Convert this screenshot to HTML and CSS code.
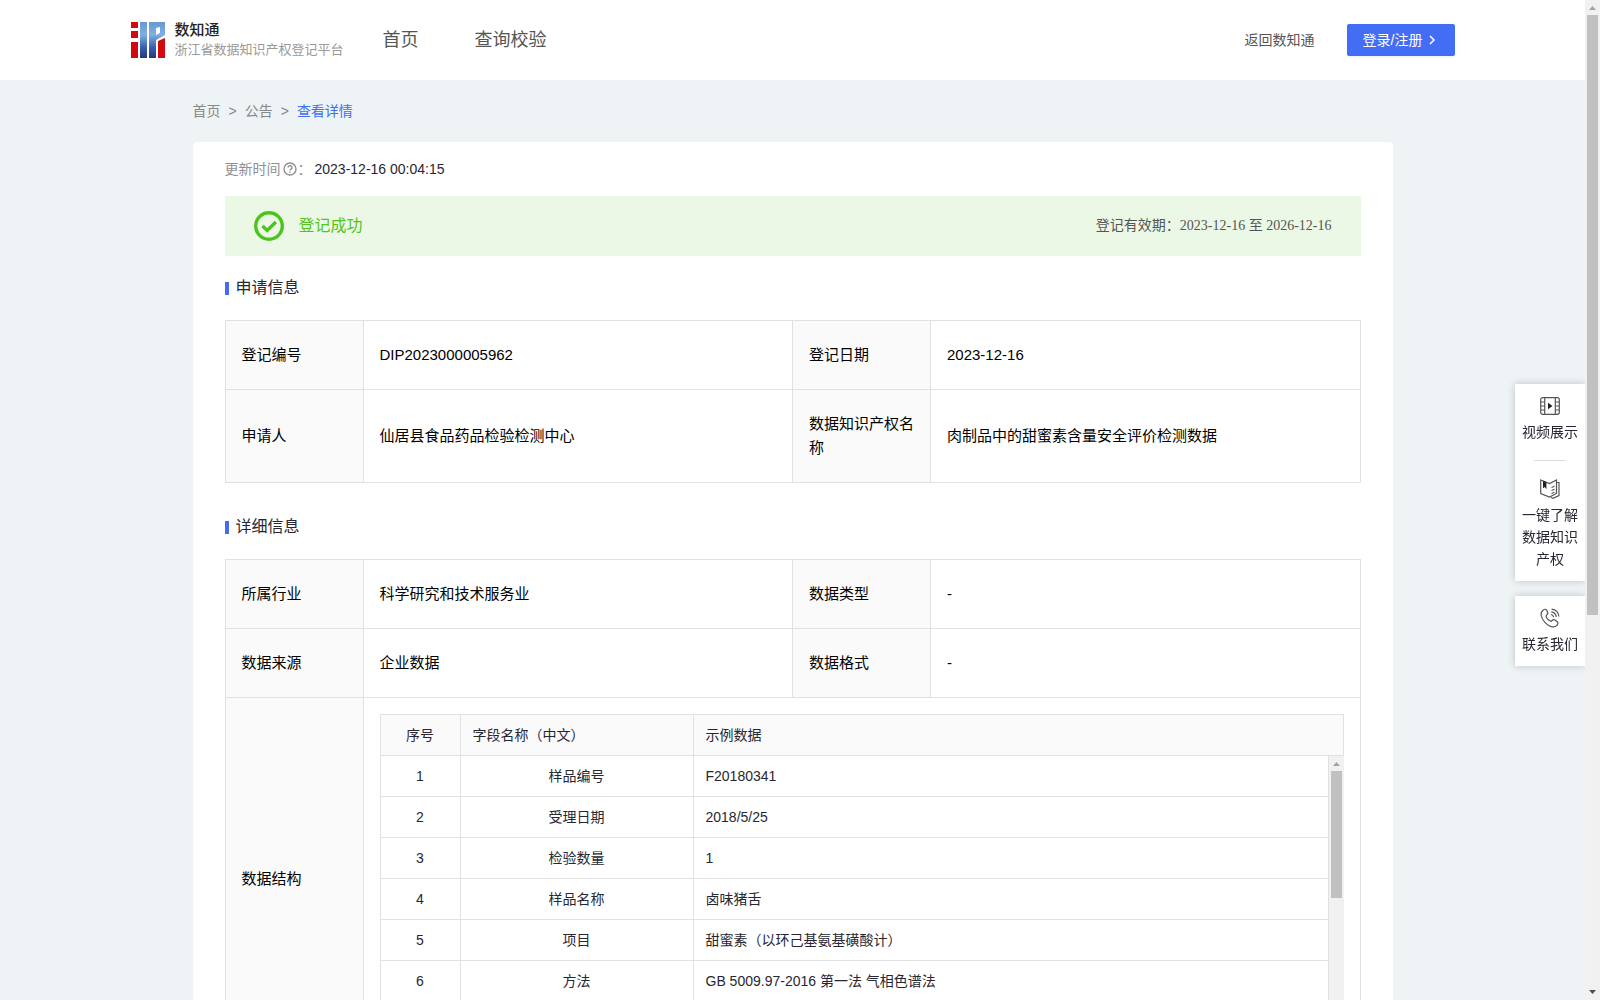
FILE: index.html
```html
<!DOCTYPE html>
<html lang="zh-CN">
<head>
<meta charset="utf-8">
<meta name="viewport" content="width=device-width, initial-scale=1">
<title>数知通 - 查看详情</title>
<link rel="stylesheet" href="styles.css">
</head>
<body>
<header class="header">
  <div class="header-inner">
    <a class="brand" href="#">
      <svg class="brand-mark" viewBox="0 0 34 36" aria-hidden="true">
        <defs>
          <linearGradient id="blue" gradientUnits="userSpaceOnUse" x1="0" y1="0" x2="0" y2="36">
            <stop offset="0" stop-color="#6699d2"/>
            <stop offset=".35" stop-color="#7fb0e4"/>
            <stop offset=".7" stop-color="#3a5fae"/>
            <stop offset="1" stop-color="#24377f"/>
          </linearGradient>
        </defs>
        <path fill="#d20a10" d="M0 0h7v6H0zM0 9h7v7H0zM0 20h7v16H0zM27 19l7-3v20h-7z"/>
        <path fill="url(#blue)" fill-rule="evenodd" d="M9 0h7v36H9zM18 0h16v13l-9 5v18h-7zM25 6v7l4-2V5z"/>
      </svg>
      <span class="brand-text">
        <strong class="brand-name">数知通</strong>
        <span class="brand-sub">浙江省数据知识产权登记平台</span>
      </span>
    </a>
    <nav class="nav">
      <a href="#">首页</a>
      <a href="#">查询校验</a>
    </nav>
    <div class="header-actions">
      <a class="back-link" href="#">返回数知通</a>
      <button class="login" type="button">登录/注册
        <svg class="chevron" viewBox="0 0 8 10" aria-hidden="true"><path d="M2 1l4 4-4 4"/></svg>
      </button>
    </div>
  </div>
</header>

<main class="page">
  <nav class="crumbs">
    <a href="#">首页</a><span>&gt;</span><a href="#">公告</a><span>&gt;</span><a class="current" href="#">查看详情</a>
  </nav>

  <article class="card">
    <div class="updated">
      <span class="updated-label">更新时间</span>
      <svg class="help" viewBox="0 0 14 14" aria-hidden="true">
        <circle cx="7" cy="7" r="6"/>
        <path d="M5 5.600a2 1.900 0 1 1 2.700 1.800c-.5.200-.7.500-.7 1.100"/>
        <path d="M7 9.600v1.200"/>
      </svg>
      <span class="updated-label">：</span>
      <time>2023-12-16 00:04:15</time>
    </div>

    <div class="banner">
      <svg class="banner-icon" viewBox="0 0 30 30" aria-hidden="true">
        <circle cx="15" cy="15" r="13.300"/>
        <path d="M8.500 15l4.700 4.500 8.700-8.500"/>
      </svg>
      <span class="banner-status">登记成功</span>
      <span class="banner-period">登记有效期：2023-12-16 至 2026-12-16</span>
    </div>

    <h2 class="section-title">申请信息</h2>
    <table class="info">
      <colgroup><col class="col-label"><col><col class="col-label"><col></colgroup>
      <tr><th>登记编号</th><td>DIP2023000005962</td><th>登记日期</th><td>2023-12-16</td></tr>
      <tr><th>申请人</th><td>仙居县食品药品检验检测中心</td><th>数据知识产权名称</th><td>肉制品中的甜蜜素含量安全评价检测数据</td></tr>
    </table>

    <h2 class="section-title">详细信息</h2>
    <table class="info">
      <colgroup><col class="col-label"><col><col class="col-label"><col></colgroup>
      <tr><th>所属行业</th><td>科学研究和技术服务业</td><th>数据类型</th><td>-</td></tr>
      <tr><th>数据来源</th><td>企业数据</td><th>数据格式</th><td>-</td></tr>
      <tr>
        <th>数据结构</th>
        <td class="nested" colspan="3">
          <table class="fields fields-head">
            <colgroup><col class="col-no"><col class="col-name"><col></colgroup>
            <tr><th class="center">序号</th><th>字段名称（中文）</th><th>示例数据</th></tr>
          </table>
          <div class="fields-body">
            <table class="fields">
              <colgroup><col class="col-no"><col class="col-name"><col></colgroup>
              <tr><td>1</td><td>样品编号</td><td>F20180341</td></tr>
              <tr><td>2</td><td>受理日期</td><td>2018/5/25</td></tr>
              <tr><td>3</td><td>检验数量</td><td>1</td></tr>
              <tr><td>4</td><td>样品名称</td><td>卤味猪舌</td></tr>
              <tr><td>5</td><td>项目</td><td>甜蜜素（以环己基氨基磺酸计）</td></tr>
              <tr><td>6</td><td>方法</td><td>GB 5009.97-2016 第一法 气相色谱法</td></tr>
            </table>
            <div class="scrollbar" aria-hidden="true">
              <svg class="arrow" viewBox="0 0 15 15"><path fill="#a3a3a3" d="M4 10h7L7.500 6z"/></svg>
              <span class="thumb thumb-table"></span>
            </div>
          </div>
        </td>
      </tr>
    </table>
  </article>
</main>

<aside class="dock">
  <div class="dock-box">
    <a class="dock-item" href="#">
      <svg viewBox="0 0 20 20" aria-hidden="true">
        <rect x=".7" y="1.700" width="18.600" height="16.600" rx="2"/>
        <path d="M4.700 2v16M15.300 2v16M1 6h3.500M1 10h3.500M1 14h3.500M15.500 6H19M15.500 10H19M15.500 14H19"/>
        <path class="solid" d="M8 6.800v6.400l4.500-3.200z"/>
      </svg>
      <span>视频展示</span>
    </a>
    <a class="dock-item" href="#">
      <svg viewBox="0 0 20 20" aria-hidden="true">
        <path d="M.7 1l8.800 3.500L16.500 1v13.500l-7 3.500-8.800-3.500z"/>
        <path d="M17 3.500h2v13l-6 2.800-2-.8M11.500 8.500l3-1.300M11.500 11.500l3-1.300M11.500 14.500l3-1.300"/>
        <path class="solid" d="M3 1.800v7.400l1.700-1.200 1.700 2.200V3.200z"/>
      </svg>
      <span>一键了解数据知识产权</span>
    </a>
  </div>
  <div class="dock-box">
    <a class="dock-item" href="#">
      <svg viewBox="0 0 20 20" aria-hidden="true">
        <path d="M6.800 2.200C5.600.8 4.400 1 3 2.300 1.500 3.600.8 5.500 1.200 7.500c1 5 5.800 10.300 10.700 11.300 2.200.5 3.900-.2 5.200-1.700 1.200-1.300 1.200-2.500-.1-3.600l-2-1.500c-1.200-.8-2-.6-2.900.5-.8.900-1.600.9-2.700.1-1.300-1-2.300-2.100-3-3.400-.6-1.100-.4-1.800.5-2.500 1-.8 1.200-1.700.5-2.800z"/>
        <path d="M11 6.500c1.500.3 2.400 1.200 2.700 2.700M11.300 3.800c2.800.4 4.600 2.200 5 5M11.600 1.200c4.200.5 6.900 3.200 7.300 7.300"/>
      </svg>
      <span>联系我们</span>
    </a>
  </div>
</aside>

<div class="scrollbar scrollbar-page" aria-hidden="true">
  <svg class="arrow" viewBox="0 0 15 15"><path fill="#a3a3a3" d="M4 10h7L7.500 6z"/></svg>
  <span class="thumb thumb-page"></span>
  <svg class="arrow arrow-end" viewBox="0 0 15 15"><path fill="#505050" d="M4 5h7L7.500 9z"/></svg>
</div>
</body>
</html>
```

FILE: styles.css
```css
* { box-sizing: border-box; }

html { scrollbar-width: none; }

body {
  margin: 0;
  padding-right: 15px;
  background: #eef3f6;
  color: #272733;
  font: 14px/22px "Liberation Sans", "Noto Sans CJK SC", sans-serif;
}

a { color: inherit; text-decoration: none; }

/* Header */
.header { background: #fff; }
.header-inner {
  display: flex;
  align-items: center;
  max-width: 1324px;
  height: 80px;
  margin: 0 auto;
}
.brand { display: flex; align-items: center; gap: 10px; }
.brand-mark { width: 34px; height: 36px; }
.brand-text { display: flex; flex-direction: column; }
.brand-name { font-size: 15px; line-height: 20px; font-weight: 500; color: #222; }
.brand-sub { font-size: 13px; line-height: 20px; color: #999; }
.nav { display: flex; gap: 56px; margin-left: 39px; font-size: 18px; color: #555; }
.header-actions { display: flex; align-items: center; gap: 32px; margin-left: auto; color: #555; }
.login {
  display: flex;
  align-items: center;
  gap: 6px;
  width: 108px;
  height: 32px;
  padding: 0 16px;
  border: 0;
  border-radius: 2px;
  background: #446df6;
  box-shadow: 0 2px 0 rgba(0, 0, 0, .04);
  color: #fff;
  font: inherit;
  white-space: nowrap;
}
.chevron { width: 8px; height: 10px; fill: none; stroke: #fff; stroke-width: 1.5; }

/* Page */
.page { max-width: 1200px; margin: 0 auto; }
.crumbs { display: flex; gap: 8px; padding: 20px 0; color: #888; }
.crumbs .current { color: #3f6ef6; }
.card { padding: 16px 32px 32px; border-radius: 4px; background: #fff; }

.updated { display: flex; align-items: center; }
.updated-label { color: #8f8f96; }
.help { width: 14px; height: 14px; margin: 0 1px 0 2px; fill: none; stroke: #8f8f96; stroke-width: 1.4; }
.updated time { margin-left: 3px; }

.banner {
  display: flex;
  align-items: center;
  height: 60px;
  margin-top: 16px;
  padding: 0 29px;
  background: #ebf8e6;
}
.banner-icon { width: 30px; height: 30px; fill: none; stroke: #4bc41c; stroke-width: 3.4; }
.banner-status { margin-left: 15px; font-size: 16px; color: #52c41a; }
.banner-period {
  margin-left: auto;
  font-family: "Liberation Serif", "Noto Sans CJK SC", serif;
  color: #555;
}

.section-title {
  display: flex;
  align-items: center;
  gap: 7px;
  margin: 20px 0;
  font-size: 16px;
  line-height: 24px;
  font-weight: 400;
}
.section-title::before { content: ""; width: 4px; height: 13px; background: #446df6; }
.info + .section-title { margin-top: 32px; }

/* Tables */
table { width: 100%; border-collapse: collapse; table-layout: fixed; }
th, td { border: 1px solid #e1e1e1; text-align: left; font-weight: 400; }
th { background: #fafafa; }
.info { color: #000; font-size: 15px; line-height: 24px; }
.info th, .info td { padding: 22px 16px; }
.info .nested { padding: 16px; }
.col-label { width: 138px; }

.fields { color: #272733; font-size: 14px; line-height: 22px; }
.info .fields th, .info .fields td { padding: 9px 12px; }
.info .fields .center { text-align: center; }
.col-no { width: 80px; }
.col-name { width: 233px; }
.fields-body { display: flex; align-items: flex-start; height: 288px; }
.fields-body .fields { flex: 1; }
.fields-body td { border-top: 0; }
.fields-body td:nth-child(-n+2) { text-align: center; }

/* Scrollbars */
.scrollbar {
  display: flex;
  flex-direction: column;
  align-self: stretch;
  width: 15px;
  background: #f1f1f1;
}
.arrow { width: 15px; height: 15px; }
.arrow-end { margin-top: auto; }
.thumb { margin: 0 2px; background: #c1c1c1; }
.thumb-table { height: 44%; }
.thumb-page { height: 60%; }
.scrollbar-page { position: fixed; top: 0; right: 0; bottom: 0; }

/* Floating dock */
.dock {
  position: fixed;
  top: 384px;
  right: 15px;
  display: flex;
  flex-direction: column;
  gap: 15px;
  width: 70px;
  text-align: center;
}
.dock-box { background: #fff; box-shadow: 0 0 8px rgba(0, 0, 0, .2); }
.dock-item {
  display: flex;
  flex-direction: column;
  align-items: center;
  gap: 5px;
  padding: 12px 6px 11px;
}
.dock-item + .dock-item::before {
  content: "";
  width: 32px;
  height: 1px;
  margin: -6px 0 13px;
  background: #ddd;
}
.dock-item svg { width: 20px; height: 20px; fill: none; stroke: #555; stroke-width: 1.2; }
.dock-item .solid { fill: #222; stroke: none; }
```
